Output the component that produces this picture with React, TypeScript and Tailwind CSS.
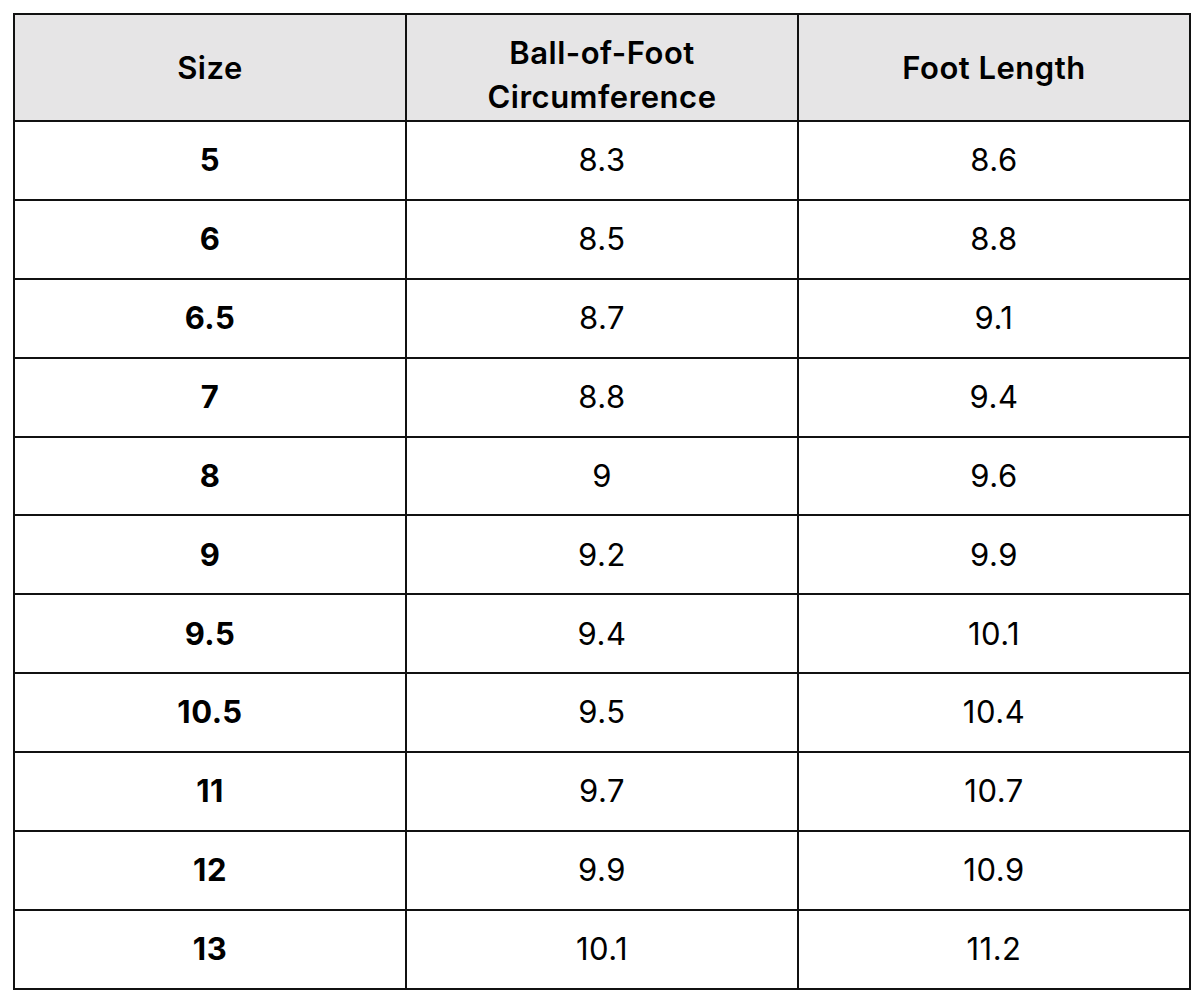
const rows: [string, string, string][] = [
  ["5", "8.3", "8.6"],
  ["6", "8.5", "8.8"],
  ["6.5", "8.7", "9.1"],
  ["7", "8.8", "9.4"],
  ["8", "9", "9.6"],
  ["9", "9.2", "9.9"],
  ["9.5", "9.4", "10.1"],
  ["10.5", "9.5", "10.4"],
  ["11", "9.7", "10.7"],
  ["12", "9.9", "10.9"],
  ["13", "10.1", "11.2"],
];

export default function App() {
  return (
    <div className="w-[1200px] h-[1000px] bg-white pt-[13px] pl-[13px]" style={{ fontFamily: "Inter, sans-serif" }}>
      <table className="w-[1176px] table-fixed border-collapse border-2 border-[#111] text-[31px] text-black tracking-[0.5px]">
        <colgroup>
          <col className="w-[392px]" />
          <col className="w-[392px]" />
          <col className="w-[392px]" />
        </colgroup>
        <thead>
          <tr className="h-[107px] bg-[#e6e5e6]">
            <th className="border-2 border-[#111] font-semibold text-center leading-[44px]">Size</th>
            <th className="border-2 border-[#111] font-semibold text-center leading-[44px] pt-[15px]">
              Ball-of-Foot
              <br />
              Circumference
            </th>
            <th className="border-2 border-[#111] font-semibold text-center leading-[44px]">Foot Length</th>
          </tr>
        </thead>
        <tbody>
          {rows.map(([size, ball, length]) => (
            <tr key={size} className="h-[78.9px]">
              <td className="border-2 border-[#111] text-center font-bold">{size}</td>
              <td className="border-2 border-[#111] text-center">{ball}</td>
              <td className="border-2 border-[#111] text-center">{length}</td>
            </tr>
          ))}
        </tbody>
      </table>
    </div>
  );
}
